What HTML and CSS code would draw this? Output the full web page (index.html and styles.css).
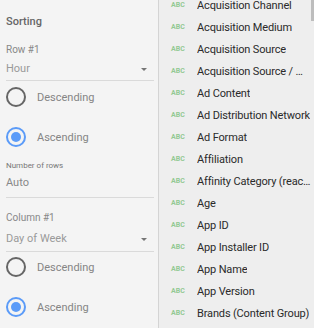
FILE: index.html
```html
<!DOCTYPE html>
<html lang="en">

<head>
    <meta charset="UTF-8">
    <meta name="viewport" content="width=device-width, initial-scale=1.0">
    <title>Sorting</title>
    <link rel="stylesheet" href="styles.css">
</head>

<body>
    <div class="app">
        <div class="panel">
            <div class="title">Sorting</div>

            <div class="label row-label">Row #1</div>
            <div class="select select-hour">
                <span>Hour</span>
                <span class="arrow"></span>
            </div>
            <div class="radio radio-first">
                <span class="circle"></span>
                <span class="radio-text">Descending</span>
            </div>
            <div class="radio radio-second">
                <span class="circle checked"></span>
                <span class="radio-text">Ascending</span>
            </div>

            <div class="small-label">Number of rows</div>
            <div class="select select-auto">
                <span>Auto</span>
            </div>

            <div class="label col-label">Column #1</div>
            <div class="select select-day">
                <span>Day of Week</span>
                <span class="arrow"></span>
            </div>
            <div class="radio radio-third">
                <span class="circle"></span>
                <span class="radio-text">Descending</span>
            </div>
            <div class="radio radio-second">
                <span class="circle checked"></span>
                <span class="radio-text">Ascending</span>
            </div>
        </div>

        <div class="list">
            <div class="scrollbar"></div>
            <ul class="items">
                <li><span class="abc">ABC</span><span class="name">Acquisition Channel</span></li>
                <li><span class="abc">ABC</span><span class="name">Acquisition Medium</span></li>
                <li><span class="abc">ABC</span><span class="name">Acquisition Source</span></li>
                <li><span class="abc">ABC</span><span class="name">Acquisition Source / Medium</span></li>
                <li><span class="abc">ABC</span><span class="name">Ad Content</span></li>
                <li><span class="abc">ABC</span><span class="name">Ad Distribution Network</span></li>
                <li><span class="abc">ABC</span><span class="name">Ad Format</span></li>
                <li><span class="abc">ABC</span><span class="name">Affiliation</span></li>
                <li><span class="abc">ABC</span><span class="name">Affinity Category (reach)</span></li>
                <li><span class="abc">ABC</span><span class="name">Age</span></li>
                <li><span class="abc">ABC</span><span class="name">App ID</span></li>
                <li><span class="abc">ABC</span><span class="name">App Installer ID</span></li>
                <li><span class="abc">ABC</span><span class="name">App Name</span></li>
                <li><span class="abc">ABC</span><span class="name">App Version</span></li>
                <li><span class="abc">ABC</span><span class="name">Brands (Content Group)</span></li>
            </ul>
        </div>
    </div>
</body>

</html>
```

FILE: styles.css
```css
body {
    margin: 0;
    font-family: Roboto, "Liberation Sans", sans-serif;
}

.app {
    display: flex;
    width: 314px;
    height: 328px;
    overflow: hidden;
}

/* left settings panel */
.panel {
    width: 148px;
    flex-shrink: 0;
    padding: 0 4px 0 6px;
    background-color: #f4f4f4;
    border-right: 1px solid #d4d4d4;
}

.title {
    margin-top: 14px;
    font-size: 11px;
    line-height: 16px;
    font-weight: 500;
    color: #666;
}

.label {
    font-size: 10px;
    line-height: 14px;
    color: #888;
}

.row-label {
    margin-top: 13px;
}

.col-label {
    margin-top: 13px;
}

.small-label {
    margin-top: 13px;
    font-size: 8px;
    line-height: 12px;
    color: #777;
}

.select {
    display: flex;
    justify-content: space-between;
    align-items: center;
    font-size: 11px;
    line-height: 16px;
    color: #9a9a9a;
    border-bottom: 1px solid #dadada;
}

.select-hour {
    margin-top: 4px;
    padding-bottom: 3px;
}

.select-auto {
    margin-top: 3px;
    padding-bottom: 6px;
    color: #888;
}

.select-day {
    margin-top: 6px;
    padding-bottom: 4px;
}

.arrow {
    width: 0;
    height: 0;
    margin-right: 7px;
    border-left: 3px solid transparent;
    border-right: 3px solid transparent;
    border-top: 3px solid #757575;
}

.radio {
    display: flex;
    align-items: center;
    height: 20px;
}

.radio-first {
    margin-top: 6px;
}

.radio-second {
    margin-top: 20px;
}

.radio-third {
    margin-top: 5px;
}

.circle {
    box-sizing: border-box;
    width: 20px;
    height: 20px;
    border: 2px solid #666;
    border-radius: 50%;
    display: flex;
    align-items: center;
    justify-content: center;
}

.circle.checked {
    border-color: #5b9bf8;
}

.circle.checked::after {
    content: "";
    width: 10px;
    height: 10px;
    border-radius: 50%;
    background-color: #5b9bf8;
}

.radio-text {
    margin-left: 11px;
    font-size: 11px;
    color: #858585;
}

/* field list */
.list {
    position: relative;
    flex: 1;
    min-width: 0;
    background-color: #eeeeee;
}

.scrollbar {
    position: absolute;
    top: 0;
    right: 0;
    width: 3px;
    height: 21px;
    background-color: #bdbdbd;
}

.items {
    list-style: none;
    margin: -6px 0 0 0;
    padding: 0;
}

.items li {
    display: flex;
    align-items: center;
    height: 22px;
    padding-left: 12px;
    padding-right: 2px;
}

.abc {
    width: 26px;
    flex-shrink: 0;
    font-size: 7px;
    font-weight: bold;
    color: #93c993;
}

.name {
    font-size: 11px;
    letter-spacing: -0.15px;
    color: #2a2a2a;
    white-space: nowrap;
    overflow: hidden;
    text-overflow: ellipsis;
}
```
